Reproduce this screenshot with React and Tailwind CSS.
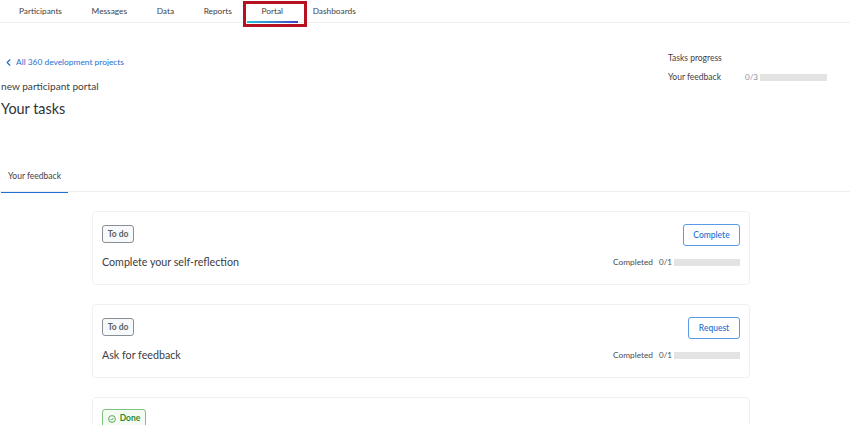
import React from 'react'
import { ChevronLeft } from 'lucide-react'

const tabs = ['Participants', 'Messages', 'Data', 'Reports', 'Portal', 'Dashboards']

function TaskCard({ title, action, actionWidth }) {
  return (
    <div className="h-[74px] rounded-[4px] border border-[#f0f0f0] bg-white pl-[9px] pr-[9px] pt-[12px]">
      <div className="flex items-start justify-between">
        <span className="mt-[1px] flex h-[18px] w-[32px] items-center justify-center rounded-[3px] border border-[#8a8e96] bg-[#f8f9fb] text-[8.5px] font-bold text-[#5c6068]">
          To do
        </span>
        <button className={`h-[22px] rounded-[3px] border border-[#5a9be6] bg-white text-[8.5px] font-medium text-[#1e6fd0] ${actionWidth}`}>
          {action}
        </button>
      </div>
      <div className="mt-[8px] flex items-center justify-between">
        <span className="text-[10.7px] leading-[16px] text-[#3b3d42]">{title}</span>
        <div className="flex items-center text-[8.3px] leading-[12px] text-[#4a4c50]">
          <span>Completed</span>
          <span className="ml-[6px] w-[13px] text-[8px] leading-[12px]">0/1</span>
          <span className="ml-[2px] h-[7px] w-[66px] bg-[#e3e3e3]" />
        </div>
      </div>
    </div>
  )
}

export default function App() {
  return (
    <div className="relative h-[425px] w-[850px] overflow-hidden bg-white font-['Lato',sans-serif] text-[#3b3d42]">
      <nav className="flex h-[23px] border-b border-[#eeeeee] pl-[4.2px]">
        {tabs.map((tab) => (
          <div key={tab} className="relative px-[14.8px] pt-[4.5px] text-[8.3px] leading-[13px] text-[#3f4147]">
            {tab}
            {tab === 'Portal' && (
              <span className="absolute bottom-[-1px] left-0 right-0 h-[2px] bg-gradient-to-r from-[#22c3dc] to-[#3f3fc4]" />
            )}
          </div>
        ))}
      </nav>
      <div className="absolute left-[243px] top-[1px] h-[26px] w-[64px] border-[3px] border-[#b5121f]" />

      <div className="flex h-[146px] justify-between">
        <div className="pl-[1px] pt-[32px]">
          <a className="flex h-[14px] items-center pl-[2px] text-[8.4px] text-[#1e6fd0]">
            <ChevronLeft size={11} strokeWidth={2.5} />
            <span className="ml-[2px]">All 360 development projects</span>
          </a>
          <p className="mt-[10px] text-[10.1px] leading-[14px] text-[#3b3d42]">new participant portal</p>
          <h1 className="mt-[5px] text-[14.4px] leading-[21px] text-[#2f3136]">Your tasks</h1>
        </div>
        <div className="mr-[23px] w-[159px] pt-[29px] text-[8.5px] leading-[12px]">
          <p className="text-[#3f4147]">Tasks progress</p>
          <div className="mt-[7px] flex items-center">
            <span className="w-[77px] text-[#3f4147]">Your feedback</span>
            <span className="w-[15px] text-[8px] leading-[12px] text-[#8a8c90]">0/3</span>
            <span className="h-[7px] w-[67px] bg-[#e3e3e3]" />
          </div>
        </div>
      </div>

      <div className="h-[23px] border-b border-[#eeeeee]">
        <div className="relative h-[23px] w-[68px] pl-[8px] pt-[1px] text-[8.5px] leading-[13px] text-[#3f4147]">
          Your feedback
          <span className="absolute bottom-[-1px] left-[1px] right-0 h-[1px] bg-[#1e6fd0]" />
        </div>
      </div>

      <main className="ml-[92px] mt-[19px] flex w-[658px] flex-col gap-[19px]">
        <TaskCard title="Complete your self-reflection" action="Complete" actionWidth="w-[57px]" />
        <TaskCard title="Ask for feedback" action="Request" actionWidth="w-[52px]" />
        <div className="h-[74px] rounded-[4px] border border-[#f0f0f0] bg-white pl-[9px] pt-[11px]">
          <span className="flex h-[19px] w-[44px] items-center justify-center gap-[4px] rounded-[3px] border border-[#7cc47c] bg-[#f3fbf2] text-[8.5px] font-bold text-[#2f8a2f]">
            <svg width="8" height="8" viewBox="0 0 16 16" fill="none" stroke="currentColor" strokeWidth="1.5">
              <circle cx="8" cy="8" r="6.8" />
              <path d="M5 8.2l2.1 2.1L11 6" />
            </svg>
            Done
          </span>
        </div>
      </main>
    </div>
  )
}
